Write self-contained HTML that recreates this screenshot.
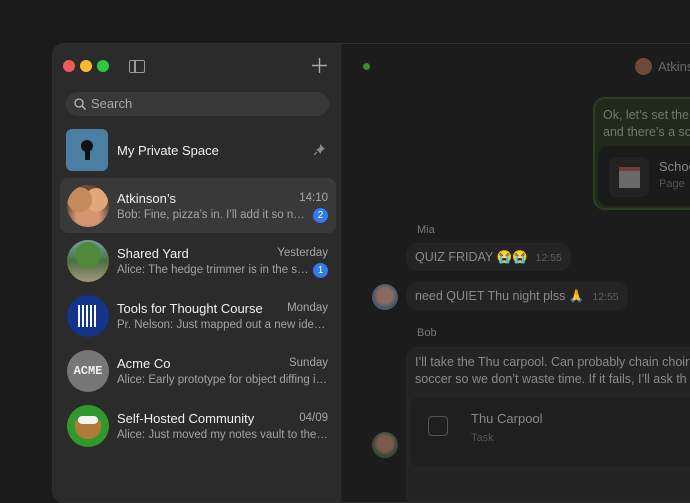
<!DOCTYPE html>
<html><head><meta charset="utf-8"><style>
*{margin:0;padding:0;box-sizing:border-box}
body{width:690px;height:453px;overflow:hidden;background:#1b1b1b;font-family:"Liberation Sans","Noto Sans CJK SC",sans-serif;position:relative}
.win{position:absolute;left:52px;top:43px;width:700px;height:460px;border-radius:12px;background:#1c1c1c;overflow:hidden;border:1px solid #303030}
.side{position:absolute;left:0;top:0;width:289px;height:100%;background:#2b2b2b;border-right:1px solid #222}
.dot{position:absolute;top:16px;width:12px;height:12px;border-radius:50%}
.abs{position:absolute}
.search{position:absolute;left:13px;top:48px;width:263px;height:24px;border-radius:12px;background:#383838;color:#a8a8a8;font-size:13px;line-height:24px;padding-left:25px}
.row{position:absolute;left:7px;width:276px;height:55px;border-radius:8px}
.av{position:absolute;left:7px;top:7px;width:42px;height:42px;border-radius:50%;overflow:hidden}
.nm{position:absolute;left:57px;top:13px;color:#f0f0f0;font-size:13px}
.tm{position:absolute;right:8px;top:14px;color:#a8a8a8;font-size:11.5px}
.pv{position:absolute;left:57px;top:31px;width:211px;color:#a3a3a3;font-size:11.5px;white-space:nowrap;overflow:hidden;text-overflow:ellipsis}
.pv.b{width:192px}
.bd{position:absolute;right:8px;top:30px;width:15px;height:15px;border-radius:50%;background:#2f7cf0;color:#fff;font-size:10px;text-align:center;line-height:15px}
.main{position:absolute;left:290px;top:0;right:0;height:100%;color:#8a8a8a;font-size:12.5px}
.bub{position:absolute;background:#242424;border-radius:12px;white-space:nowrap;overflow:hidden}
.t{color:#5e5e5e;font-size:10.5px;margin-left:8px}
</style></head><body>
<div class="win">
 <div class="side">
  <div class="dot" style="left:10px;background:#ef5c57"></div>
  <div class="dot" style="left:27px;background:#f8bd2f"></div>
  <div class="dot" style="left:44px;background:#2ac940"></div>
  <div class="abs" style="left:76px;top:16px;width:16px;height:13px;border:1.5px solid #9a9a9a;border-radius:2px"><div style="position:absolute;left:4px;top:0;width:1.5px;height:100%;background:#9a9a9a"></div></div>
  <svg class="abs" style="left:259px;top:14px" width="15" height="15" viewBox="0 0 15 15"><path d="M7.5 0v15M0 7.5h15" stroke="#aaa" stroke-width="1.4"/></svg>
  <div class="search"><svg style="position:absolute;left:8px;top:6px" width="12" height="12" viewBox="0 0 12 12"><circle cx="5" cy="5" r="4" fill="none" stroke="#bbb" stroke-width="1.3"/><path d="M8 8l3.5 3.5" stroke="#bbb" stroke-width="1.3"/></svg>Search</div>
  <div class="abs" style="left:13px;top:85px;width:42px;height:42px;border-radius:6px;background:#4b7ea3">
   <div style="position:absolute;left:15px;top:11px;width:12px;height:12px;border-radius:50%;background:#111"></div>
   <div style="position:absolute;left:18.5px;top:19px;width:5px;height:12px;background:#111;border-radius:1px"></div>
  </div>
  <div class="abs" style="left:64px;top:99px;color:#f0f0f0;font-size:13px">My Private Space</div>
  <svg class="abs" style="left:261px;top:100px" width="11" height="11" viewBox="0 0 11 11"><path d="M6 0l5 5-2 1-2 2 0 2-5-5 2 0 2-2z" fill="#8a8a8a"/><path d="M3 8l-3 3" stroke="#8a8a8a" stroke-width="1.2"/></svg>

  <div class="row" style="top:134px;background:#393939">
   <div class="av" style="background:radial-gradient(circle at 30% 35%,#c48a5c 0 30%,transparent 32%),radial-gradient(circle at 70% 35%,#e0a878 0 28%,transparent 30%),radial-gradient(circle at 50% 75%,#d49570 0 30%,#6b4a3a 60%)"></div>
   <div class="nm">Atkinson’s</div><div class="tm">14:10</div>
   <div class="pv b">Bob: Fine, pizza’s in. I’ll add it so no one forgets</div><div class="bd">2</div>
  </div>
  <div class="row" style="top:189px">
   <div class="av" style="background:radial-gradient(circle at 50% 35%,#4f8a3a 0 35%,transparent 40%),linear-gradient(#7aa0b5,#4b6e3c 50%,#a59a80)"></div>
   <div class="nm">Shared Yard</div><div class="tm">Yesterday</div>
   <div class="pv b">Alice: The hedge trimmer is in the storage shed</div><div class="bd">1</div>
  </div>
  <div class="row" style="top:244px">
   <div class="av" style="background:#14338a"><div style="position:absolute;left:11px;top:10px;width:20px;height:22px;background:repeating-linear-gradient(90deg,#fff 0 2px,transparent 2px 4px)"></div></div>
   <div class="nm">Tools for Thought Course</div><div class="tm">Monday</div>
   <div class="pv">Pr. Nelson: Just mapped out a new idea space</div>
  </div>
  <div class="row" style="top:299px">
   <div class="av" style="background:#777;color:#eee;font-family:'Liberation Mono',monospace;font-weight:bold;font-size:12px;text-align:center;line-height:42px">ACME</div>
   <div class="nm">Acme Co</div><div class="tm">Sunday</div>
   <div class="pv">Alice: Early prototype for object diffing is ready</div>
  </div>
  <div class="row" style="top:354px">
   <div class="av" style="background:#2f9a2a"><div style="position:absolute;left:8px;top:14px;width:26px;height:20px;border-radius:4px 4px 12px 12px;background:#b27a3a"></div><div style="position:absolute;left:11px;top:11px;width:20px;height:8px;border-radius:5px;background:#f2f2f2"></div></div>
   <div class="nm">Self-Hosted Community</div><div class="tm">04/09</div>
   <div class="pv">Alice: Just moved my notes vault to the new server</div>
  </div>
 </div>
 <div class="main">
  <div class="abs" style="left:20px;top:19px;width:7px;height:7px;border-radius:50%;background:#3f8a1f"></div>
  <div class="abs" style="left:292px;top:14px;width:17px;height:17px;border-radius:50%;background:#6b4a3a"></div>
  <div class="abs" style="left:315px;top:15px;font-size:13px;color:#6a6a6a">Atkinson’s</div>
  <div class="abs" style="left:250px;top:53px;width:200px;height:113px;border-radius:12px;background:#1f2a1b;border:2px solid #2a3f22">
   <div style="position:absolute;left:8px;top:8px;color:#6f7a6a;font-size:12.5px;line-height:17px;white-space:nowrap">Ok, let’s set the<br>and there’s a sci</div>
   <div style="position:absolute;left:3px;top:47px;width:200px;height:60px;border-radius:10px;background:#1a1a1a">
    <div style="position:absolute;left:11px;top:11px;width:40px;height:40px;border-radius:6px;background:#222"><div style="position:absolute;left:10px;top:10px;width:21px;height:21px;background:#6a6a6a;border-top:4px solid #7a3a3a"></div></div>
    <div style="position:absolute;left:61px;top:13px;color:#888;font-size:13px">School</div>
    <div style="position:absolute;left:61px;top:32px;color:#555;font-size:11px">Page</div>
   </div>
  </div>
  <div class="abs" style="left:74px;top:180px;color:#777;font-size:11px">Mia</div>
  <div class="bub" style="left:63px;top:199px;height:28px;padding:7px 9px">QUIZ FRIDAY 😭😭<span class="t">12:55</span></div>
  <div class="abs" style="left:29px;top:240px;width:26px;height:26px;border-radius:50%;background:radial-gradient(circle at 50% 45%,#8a6a5a 0 40%,#4a5a6a 60%)"></div>
  <div class="bub" style="left:63px;top:238px;height:28px;padding:7px 9px">need QUIET Thu night plss 🙏<span class="t">12:55</span></div>
  <div class="abs" style="left:74px;top:283px;color:#777;font-size:11px">Bob</div>
  <div class="bub" style="left:63px;top:303px;width:320px;height:160px;padding:7px 9px;line-height:17px">I’ll take the Thu carpool. Can probably chain choir<br>soccer so we don’t waste time. If it fails, I’ll ask th
   <div style="position:absolute;left:4px;top:50px;width:330px;height:70px;background:#1f1f1f;border-radius:10px">
    <div style="position:absolute;left:18px;top:19px;width:20px;height:20px;border:1.5px solid #555;border-radius:4px"></div>
    <div style="position:absolute;left:61px;top:13px;color:#8a8a8a;font-size:13px">Thu Carpool</div>
    <div style="position:absolute;left:61px;top:33px;color:#555;font-size:11px">Task</div>
   </div>
  </div>
  <div class="abs" style="left:29px;top:388px;width:26px;height:26px;border-radius:50%;background:radial-gradient(circle at 50% 45%,#7a5a4a 0 40%,#3a4a3a 60%)"></div>
 </div>
</div>
</body></html>
